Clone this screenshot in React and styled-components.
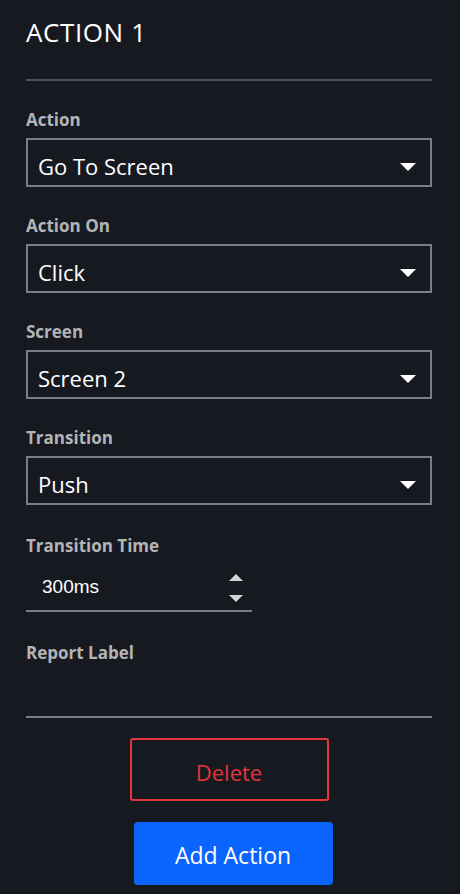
import styled, { createGlobalStyle } from 'styled-components';

const GlobalStyle = createGlobalStyle`
  html, body {
    margin: 0;
    padding: 0;
    background: #171921;
  }
  body {
    font-family: "Open Sans", "Noto Sans", sans-serif;
    color: #ffffff;
  }
`;

const fields = [
    { label: 'Action', value: 'Go To Screen' },
    { label: 'Action On', value: 'Click' },
    { label: 'Screen', value: 'Screen 2' },
    { label: 'Transition', value: 'Push' },
];

export default function App() {
    return (
        <>
            <GlobalStyle />
            <Panel>
                <Title>ACTION 1</Title>
                <Divider />

                {fields.map((field) => (
                    <FieldGroup key={field.label}>
                        <Label>{field.label}</Label>
                        <Select>
                            <span>{field.value}</span>
                            <Caret />
                        </Select>
                    </FieldGroup>
                ))}

                <FieldGroup $gap={27}>
                    <Label>Transition Time</Label>
                    <NumberInput>
                        <span>300ms</span>
                        <Spinner>
                            <SpinArrow $up />
                            <SpinArrow />
                        </Spinner>
                    </NumberInput>
                </FieldGroup>

                <FieldGroup $gap={27}>
                    <Label>Report Label</Label>
                    <TextInput />
                </FieldGroup>

                <Buttons>
                    <DeleteButton>Delete</DeleteButton>
                    <AddButton>Add Action</AddButton>
                </Buttons>
            </Panel>
        </>
    );
}

const Panel = styled.div`
  display: flex;
  flex-direction: column;
  width: 406px;
  padding: 0 28px 0 26px;
`;

const Title = styled.div`
  height: 64px;
  padding-top: 14px;
  box-sizing: border-box;
  font-size: 26px;
  line-height: 36px;
  font-weight: 400;
  letter-spacing: 0.6px;
`;

const Divider = styled.div`
  margin-top: 15px;
  height: 2px;
  background: #4e505a;
`;

const FieldGroup = styled.div`
  display: flex;
  flex-direction: column;
  margin-top: ${(p) => p.$gap || 25}px;
`;

const Label = styled.div`
  height: 24px;
  padding-top: 2px;
  line-height: 24px;
  font-size: 17px;
  font-weight: 700;
  color: #b4b4b6;
  margin-bottom: 6px;
`;

const Select = styled.div`
  display: flex;
  align-items: center;
  justify-content: space-between;
  height: 49px;
  box-sizing: border-box;
  border: 2px solid #7b7c86;
  padding: 6px 14px 0 10px;
  font-size: 22px;
  color: #ffffff;
`;

const Caret = styled.div`
  width: 0;
  height: 0;
  border-left: 8px solid transparent;
  border-right: 8px solid transparent;
  border-top: 8px solid #ffffff;
  margin-top: 3px;
`;

const NumberInput = styled.div`
  display: flex;
  align-items: center;
  justify-content: space-between;
  width: 226px;
  height: 48px;
  box-sizing: border-box;
  border-bottom: 2px solid #7b7c86;
  padding: 0 9px 0 16px;
  font-family: "Liberation Sans", Arial, sans-serif;
  font-size: 19px;
  color: #ffffff;
`;

const Spinner = styled.div`
  display: flex;
  flex-direction: column;
  gap: 14px;
  margin-top: 2px;
`;

const SpinArrow = styled.div`
  width: 0;
  height: 0;
  border-left: 7px solid transparent;
  border-right: 7px solid transparent;
  ${(p) => (p.$up ? 'border-bottom: 7px solid #d4d4d6;' : 'border-top: 7px solid #d4d4d6;')}
`;

const TextInput = styled.div`
  height: 45px;
  border-bottom: 2px solid #7b7c86;
`;

const Buttons = styled.div`
  display: flex;
  flex-direction: column;
  align-items: center;
  gap: 21px;
  margin-top: 20px;
`;

const DeleteButton = styled.button`
  width: 199px;
  height: 63px;
  padding-top: 5px;
  background: transparent;
  border: 2px solid #e3353b;
  border-radius: 3px;
  color: #e3353b;
  font-family: "Open Sans", "Noto Sans", sans-serif;
  font-size: 22px;
`;

const AddButton = styled.button`
  width: 199px;
  height: 63px;
  padding-top: 4px;
  margin-left: 8px;
  background: #0a64fe;
  border: none;
  border-radius: 4px;
  color: #ffffff;
  font-family: "Open Sans", "Noto Sans", sans-serif;
  font-size: 23px;
`;
